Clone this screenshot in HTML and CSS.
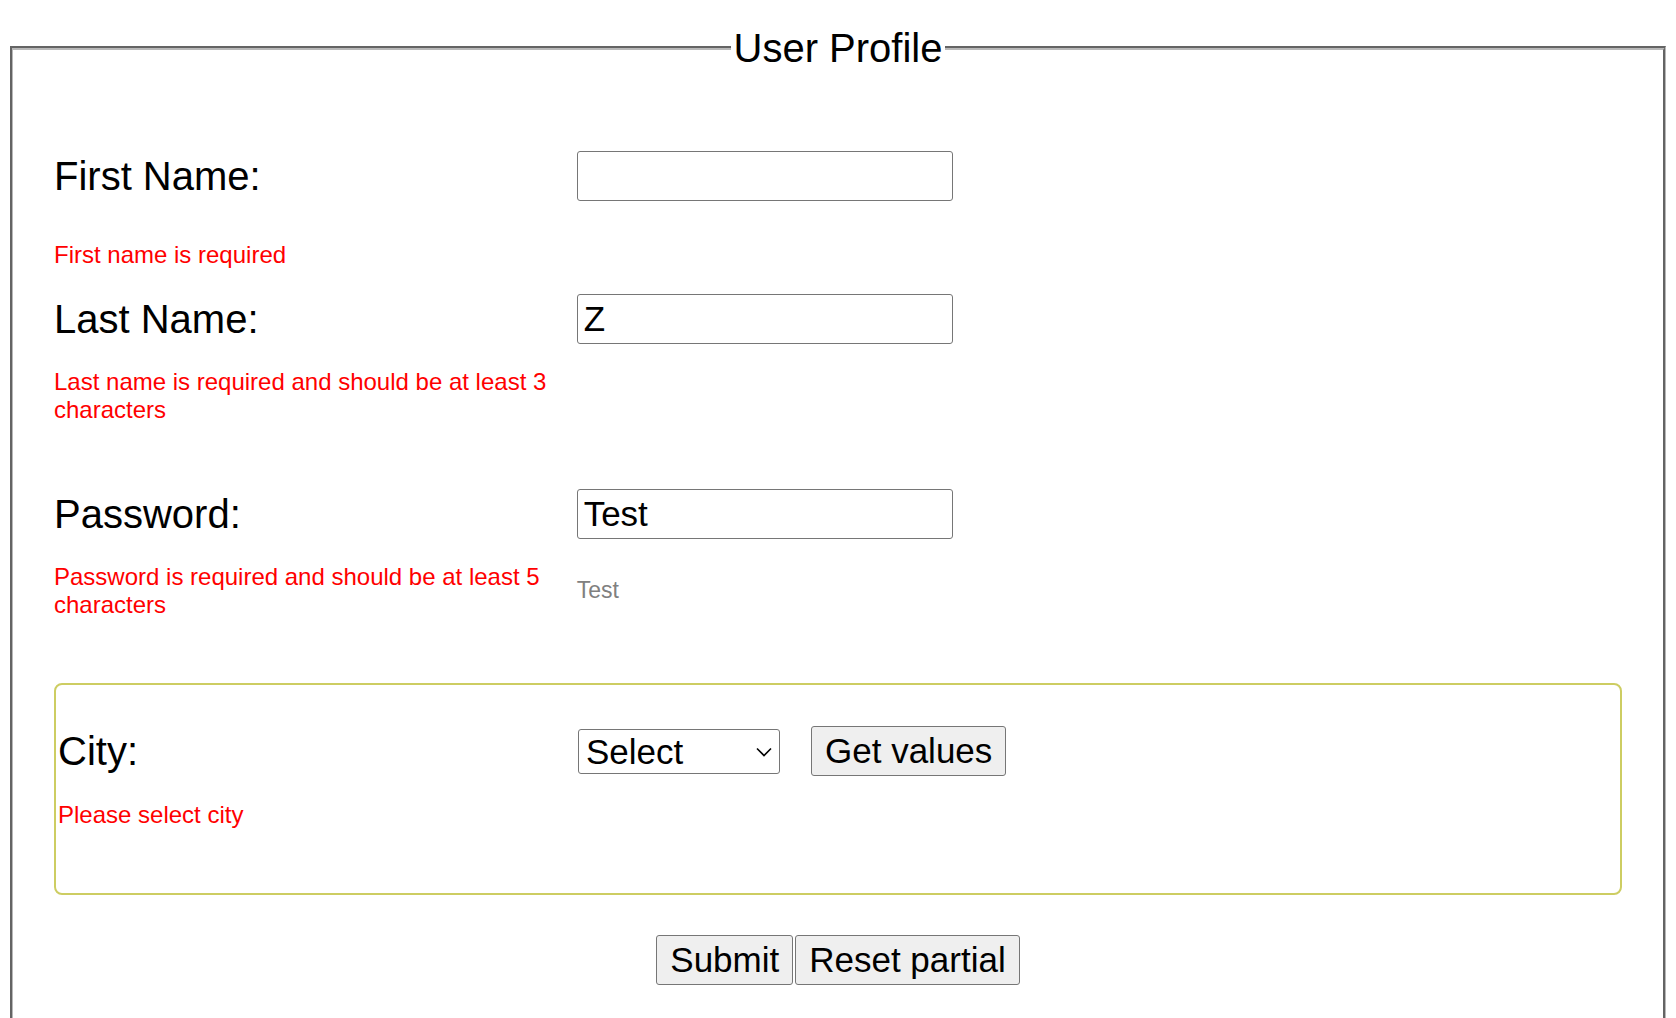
FILE: index.html
```html
<!DOCTYPE html>
<html lang="en">
<head>
<meta charset="utf-8">
<title>User Profile</title>
<link rel="stylesheet" href="styles.css">
</head>
<body>
<form class="profile-form">
  <fieldset class="profile">
    <legend class="profile-title">User Profile</legend>

    <div class="field field--first">
      <label class="field-label" for="firstName">First Name:</label>
      <input class="text-input" id="firstName" type="text" value="">
      <div class="field-error">First name is required</div>
    </div>

    <div class="field">
      <label class="field-label" for="lastName">Last Name:</label>
      <input class="text-input" id="lastName" type="text" value="Z">
      <div class="field-error">Last name is required and should be at least 3 characters</div>
    </div>

    <div class="field field--password">
      <label class="field-label" for="password">Password:</label>
      <input class="text-input" id="password" type="text" value="Test">
      <div class="field-error">Password is required and should be at least 5 characters</div>
      <div class="field-hint">Test</div>
    </div>

    <div class="city-box">
      <div class="field field--city">
        <label class="field-label" for="city">City:</label>
        <div class="city-controls">
          <span class="select-wrap">
            <select class="select-input" id="city">
              <option>Select</option>
            </select>
            <svg class="select-arrow" width="16" height="10" viewBox="0 0 16 10" aria-hidden="true">
              <path d="M1 1.5 L8 8.5 L15 1.5" fill="none" stroke="#000" stroke-width="1.6"/>
            </svg>
          </span>
          <button class="btn" type="button">Get values</button>
        </div>
        <div class="field-error">Please select city</div>
      </div>
    </div>

    <div class="actions">
      <button class="btn" type="submit">Submit</button>
      <button class="btn" type="button">Reset partial</button>
    </div>
  </fieldset>
</form>
</body>
</html>
```

FILE: styles.css
```css
body {
  margin: 8px;
  font-family: "Liberation Sans", Arial, sans-serif;
  color: #000;
  background: #fff;
}

.profile-form {
  margin: 0;
}

.profile {
  margin: 17px 2px 0;
  padding: 80px 41px 40px;
  border-style: groove;
  border-color: #b8b8b8;
  border-width: 4px 3px 3px 3px;
  min-width: 0;
}

.profile-title {
  margin: 0 auto;
  padding: 0 3px;
  font-size: 40px;
  line-height: 46px;
}

.field {
  display: grid;
  grid-template-columns: minmax(0, 1fr) minmax(0, 2fr);
  align-items: center;
  row-gap: 24.5px;
  margin-bottom: 65.5px;
}

.field--first {
  row-gap: 40px;
  margin-bottom: 25px;
}

.field--password {
  margin-bottom: 65px;
}

.field--city {
  margin-bottom: 0;
}

.field-label {
  font-size: 40px;
  line-height: 46px;
}

.field-error {
  grid-column: 1;
  font-size: 24px;
  line-height: 27.6px;
  color: #ff0000;
}

.field-hint {
  grid-column: 2;
  font-size: 23px;
  color: #808080;
}

.text-input {
  box-sizing: border-box;
  width: 376px;
  height: 50px;
  margin: 0;
  padding: 0 6px;
  border: 1px solid #767676;
  border-radius: 3px;
  font-family: inherit;
  font-size: 35px;
  color: #000;
  background: #fff;
}

.city-box {
  margin: 0;
  padding: 41px 2px 64px;
  border: 2px solid #cdcd62;
  border-radius: 8px;
}

.city-controls {
  display: flex;
  align-items: center;
  gap: 31px;
}

.select-wrap {
  position: relative;
  display: inline-flex;
}

.select-input {
  -webkit-appearance: none;
  appearance: none;
  box-sizing: border-box;
  width: 202px;
  height: 45px;
  margin: 0;
  padding: 0 30px 0 7px;
  border: 1px solid #767676;
  border-radius: 3px;
  font-family: inherit;
  font-size: 35px;
  color: #000;
  background: #fff;
}

.select-arrow {
  position: absolute;
  right: 8px;
  top: 18px;
  pointer-events: none;
}

.btn {
  box-sizing: border-box;
  height: 50px;
  margin: 0;
  padding: 0 13px;
  border: 1px solid #767676;
  border-radius: 3px;
  background: #efefef;
  font-family: inherit;
  font-size: 35px;
  color: #000;
}

.actions {
  display: flex;
  justify-content: center;
  gap: 2px;
  margin-top: 40.5px;
}
```
